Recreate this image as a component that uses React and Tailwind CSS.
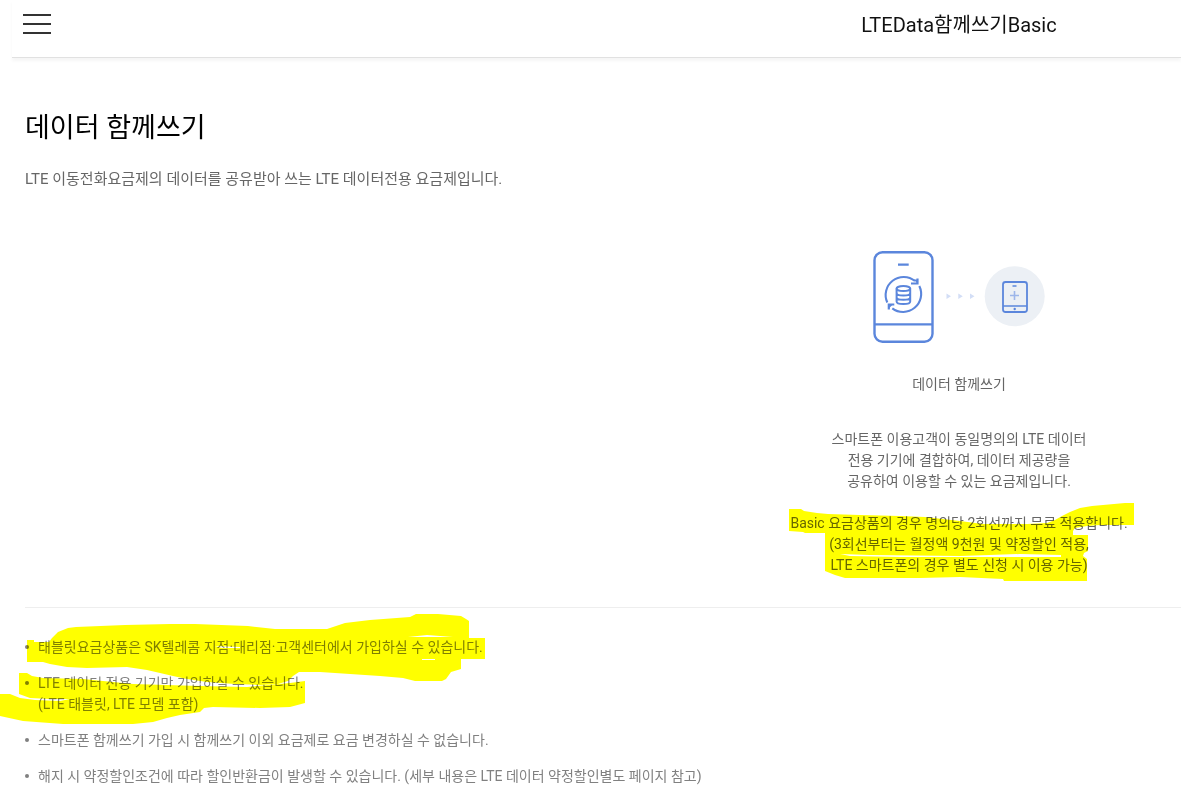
const hamburger = 'block h-[2px] w-7 bg-[#333]'

const notes = [
  ['태블릿요금상품은 SK텔레콤 지점·대리점·고객센터에서 가입하실 수 있습니다.'],
  ['LTE 데이터 전용 기기만 가입하실 수 있습니다.', '(LTE 태블릿, LTE 모뎀 포함)'],
  ['스마트폰 함께쓰기 가입 시 함께쓰기 이외 요금제로 요금 변경하실 수 없습니다.'],
  ['해지 시 약정할인조건에 따라 할인반환금이 발생할 수 있습니다. (세부 내용은 LTE 데이터 약정할인별도 페이지 참고)'],
]

function ShareIcon() {
  return (
    <svg width="174" height="94" viewBox="0 0 174 94" fill="none" stroke="#5b86dc" aria-hidden="true">
      {/* Phone */}
      <rect x="2.5" y="2.2" width="58" height="89.5" rx="8" strokeWidth="2.4" />
      <path d="M2.5 74.3h58M26 14.7h10.7" strokeWidth="2.2" />

      {/* Sync arrows around the data stack */}
      <path d="M15.3 52.5A18 18 0 0 1 43 31M47.3 36A18 18 0 0 1 20.3 58.3" strokeWidth="2.1" />
      <path d="M45.5 28.5v5h-6.5M16.8 59.5v-5h5.5" strokeWidth="2.2" />
      <path d="M41.5 29.5l4 0v4zM16.8 58.5v-4h4z" fill="#5b86dc" stroke="none" />
      <ellipse cx="31.4" cy="38.6" rx="6.8" ry="2.5" strokeWidth="2" />
      <path d="M24.6 38.6v12.8c0 1.5 3 2.5 6.8 2.5s6.8-1 6.8-2.5V38.6M24.6 43c0 1.5 3 2.5 6.8 2.5s6.8-1 6.8-2.5M24.6 47.3c0 1.5 3 2.5 6.8 2.5s6.8-1 6.8-2.5" strokeWidth="2" />

      <path d="M74.5 43.5l4.5 2.8-4.5 2.8zM86.3 43.5l4.5 2.8-4.5 2.8zM98 43.5l4.5 2.8-4.5 2.8z" fill="#d3def6" stroke="none" />

      {/* Tablet */}
      <circle cx="142.7" cy="46.3" r="30" fill="#ecf0f5" stroke="none" />
      <rect x="131" y="32" width="24" height="30" rx="2.5" strokeWidth="1.8" />
      <path d="M131 56h24M140.5 36h4" strokeWidth="1.6" />
      <path d="M142.5 41v9M138 45.5h9" stroke="#9db6ea" strokeWidth="1.6" />
      <circle cx="142.7" cy="59" r="1.2" fill="#5b86dc" stroke="none" />
    </svg>
  )
}

// Marker strokes, multiplied over the text below them
function PriceMarker() {
  return (
    <svg
      className="pointer-events-none absolute -top-[11px] left-1/2 -translate-x-1/2 mix-blend-multiply"
      width="350" height="80" viewBox="784 502 350 80" fill="#ffff00" fillRule="evenodd" aria-hidden="true"
    >
      <path d="M789 509H801L804 511L817 513L828 514L860 515L900 516L925 517L960 521L983 524L1027 524L1047 523L1055 520L1062 516L1070 512L1080 508L1092 506L1125 503H1134V525H1100L1087 526L1075 528L1073 531V535H1088V551L1084 553L1083 556L1087 559V581H1004L1003 579L960 577L920 578H845L835 575L825 571V533H805L803 532L789 531Z M840 554L870 555L960 556L1020 554L1061 555V557L1000 557L900 557L850 556Z" />
    </svg>
  )
}

function NotesMarker() {
  return (
    <svg
      className="pointer-events-none absolute -left-[25px] top-0 mix-blend-multiply"
      width="500" height="120" viewBox="0 607 500 120" fill="#ffff00" fillRule="evenodd" aria-hidden="true"
    >
      <path d="M27 639H34V641H49L52 637L58 631L68 627L76 626L125 624L170 623H195L248 625L275 628H327L345 622L370 619L410 616L416 613H438L461 615L466 618L469 620V637H485V658H461V668L451 671L446 678L442 680H415L403 677L380 675L320 671H299L293 675L288 680L278 683L260 684L235 683L207 681L187 678L173 675L160 672L147 669L127 666L87 667L67 666L50 663L43 661H27Z M408 636L427 634L440 635L453 636Z M422 658H435V659H422Z M215 645L240 646V647L222 647Z" />
      <path d="M19 672H27L32 675L43 677L83 678L113 681L133 683L200 685L247 686L290 682L305 680V702L290 706L260 707L213 706L204 707L200 711L180 714L167 717L153 721L133 723H63L23 720L0 715V693H10L20 697L35 699L60 700L70 698L50 698L30 697L19 693Z" />
    </svg>
  )
}

export default function App() {
  return (
    <div className="overflow-x-hidden bg-white pb-2 font-['Roboto','Noto_Sans_CJK_KR',sans-serif] text-[#666]">
      <header className="ml-3 grid h-[58px] grid-cols-[minmax(0,1fr)_444px] items-start border-b border-[#e1e1e1] shadow-[0_3px_3px_rgba(0,0,0,0.04)]">
        <button type="button" aria-label="메뉴" className="ml-[11px] mt-[14px] flex w-7 flex-col gap-[7px]">
          <span className={hamburger} />
          <span className={hamburger} />
          <span className={hamburger} />
        </button>
        <h1 className="mt-[10px] text-center text-[20px] font-normal leading-[30px] text-[#111]">LTEData함께쓰기Basic</h1>
      </header>

      <main className="pl-[25px]">
        <h2 className="pt-[49px] text-[27px] font-normal leading-[42px] text-black">데이터 함께쓰기</h2>
        <p className="mt-[18px] text-[15px] leading-6">LTE 이동전화요금제의 데이터를 공유받아 쓰는 LTE 데이터전용 요금제입니다.</p>

        <section className="ml-auto mt-[59px] flex w-[444px] flex-col items-center pb-[31px] text-center text-[14px] leading-[21px]">
          <ShareIcon />
          <h3 className="mt-[30px]">데이터 함께쓰기</h3>
          <p className="mt-[34px]">
            스마트폰 이용고객이 동일명의의 LTE 데이터<br />
            전용 기기에 결합하여, 데이터 제공량을<br />
            공유하여 이용할 수 있는 요금제입니다.
          </p>
          <div className="relative mt-[21px]">
            <p>
              Basic 요금상품의 경우 명의당 2회선까지 무료 적용합니다.<br />
              (3회선부터는 월정액 9천원 및 약정할인 적용,<br />
              LTE 스마트폰의 경우 별도 신청 시 이용 가능)
            </p>
            <PriceMarker />
          </div>
        </section>

        <div className="relative border-t border-[#eee] pt-[29px]">
          <ul className="flex flex-col gap-[15px] text-[14px] leading-[21px] text-[#808080]">
            {notes.map((lines) => (
              <li key={lines[0]} className="flex gap-[9px]">
                <span className="mt-2 size-1 shrink-0 rounded-full bg-[#808080]" />
                <div>
                  {lines.map((line) => <p key={line}>{line}</p>)}
                </div>
              </li>
            ))}
          </ul>
          <NotesMarker />
        </div>
      </main>
    </div>
  )
}
